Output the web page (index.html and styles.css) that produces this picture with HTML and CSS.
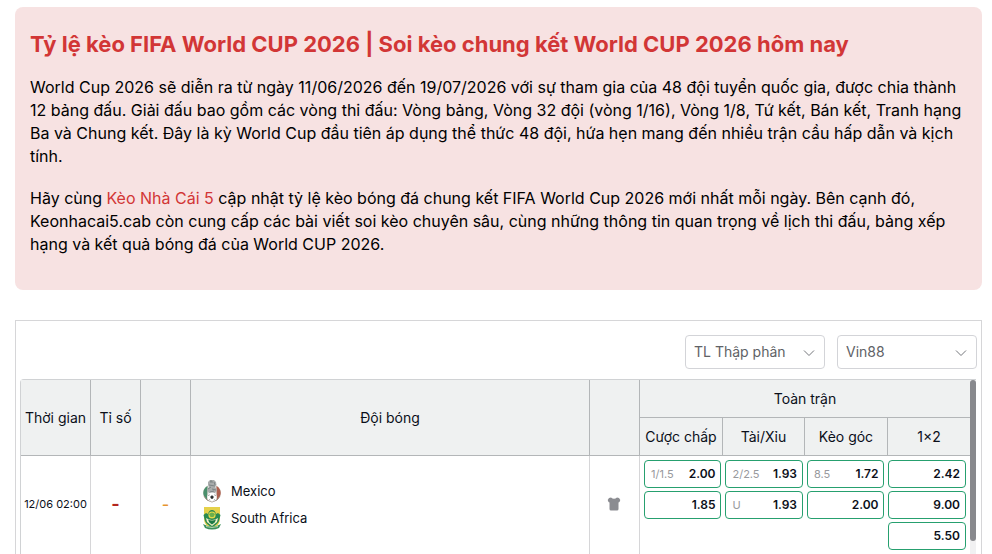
FILE: index.html
```html
<!DOCTYPE html>
<html lang="vi">
<head>
<meta charset="utf-8">
<meta name="viewport" content="width=device-width, initial-scale=1">
<title>Tỷ lệ kèo FIFA World CUP 2026</title>
<link rel="stylesheet" href="styles.css">
</head>
<body>
<main class="page">
  <section class="intro">
    <h1 class="intro-title">Tỷ lệ kèo FIFA World CUP 2026 | Soi kèo chung kết World CUP 2026 hôm nay</h1>
    <p>World Cup 2026 sẽ diễn ra từ ngày 11/06/2026 đến 19/07/2026 với sự tham gia của 48 đội tuyển quốc gia, được chia thành 12 bảng đấu. Giải đấu bao gồm các vòng thi đấu: Vòng bảng, Vòng 32 đội (vòng 1/16), Vòng 1/8, Tứ kết, Bán kết, Tranh hạng Ba và Chung kết. Đây là kỳ World Cup đầu tiên áp dụng thể thức 48 đội, hứa hẹn mang đến nhiều trận cầu hấp dẫn và kịch tính.</p>
    <p>Hãy cùng <a href="#">Kèo Nhà Cái 5</a> cập nhật tỷ lệ kèo bóng đá chung kết FIFA World Cup 2026 mới nhất mỗi ngày. Bên cạnh đó, Keonhacai5.cab còn cung cấp các bài viết soi kèo chuyên sâu, cùng những thông tin quan trọng về lịch thi đấu, bảng xếp hạng và kết quả bóng đá của World CUP 2026.</p>
  </section>

  <section class="board">
    <div class="filters">
      <div class="filter">
        <select aria-label="Loại tỷ lệ"><option>TL Thập phân</option></select>
        <svg class="chevron" viewBox="0 0 12 8" aria-hidden="true"><path d="M1 1.500 6 6.500 11 1.500"/></svg>
      </div>
      <div class="filter">
        <select aria-label="Nhà cái"><option>Vin88</option></select>
        <svg class="chevron" viewBox="0 0 12 8" aria-hidden="true"><path d="M1 1.500 6 6.500 11 1.500"/></svg>
      </div>
    </div>

    <div class="scroller">
      <table class="odds">
        <colgroup>
          <col class="col-time"><col class="col-small"><col class="col-small"><col><col class="col-small">
          <col class="col-wide"><col class="col-odds"><col class="col-wide"><col class="col-odds">
        </colgroup>
        <thead>
          <tr>
            <th rowspan="2">Thời gian</th>
            <th rowspan="2">Tỉ số</th>
            <th rowspan="2"></th>
            <th rowspan="2">Đội bóng</th>
            <th rowspan="2"></th>
            <th colspan="4" class="last">Toàn trận</th>
          </tr>
          <tr>
            <th>Cược chấp</th>
            <th>Tài/Xỉu</th>
            <th>Kèo góc</th>
            <th class="last">1×2</th>
          </tr>
        </thead>
        <tbody>
          <tr>
            <td class="time">12/06 02:00</td>
            <td class="score">-</td>
            <td class="half">-</td>
            <td class="teams">
              <div class="team">
                <svg class="crest" viewBox="0 0 20 24" aria-hidden="true">
                  <ellipse cx="10" cy="14" rx="9" ry="8.500" fill="#d2cdc6"/>
                  <path d="M5.500 7C0 10 0 17 5 21Z" fill="#4a8f6c"/>
                  <path d="M14.500 7C20 10 20 17 15 21Z" fill="#b0604f"/>
                  <path d="M6 6h8v15H6Z" fill="#e4e4e4"/>
                  <path d="M8 1 12 1 14 3 14.500 6 13 8 15 11 13 14H7L5 11 7 8 6 6 6 3Z" fill="#a9acac"/>
                  <path d="M8 3h3M7 6l6 1M6 10l3-2M14 11l-4-1M8 13l4-1M9 1v2M12 3l1 3" stroke="#6c7274" stroke-width=".7" fill="none"/>
                  <path d="M2 17q2 5 8 6 6-1 8-6" stroke="#9b8c7f" stroke-width="1" fill="none"/>
                  <circle cx="10" cy="18" r="4.600" fill="#fff"/>
                  <path d="m10 16.600 1.500 1.100-.6 1.700H9.100l-.6-1.700ZM6.500 17l.8-1.500M12.700 15.500l.8 1.500M7 20.500l1.200.8M13 20.500l-1.200.8" fill="#292c2d" stroke="#292c2d" stroke-width=".5"/>
                </svg>
                <span>Mexico</span>
              </div>
              <div class="team">
                <svg class="crest" viewBox="0 0 20 24" aria-hidden="true">
                  <path d="M2 1h16v12q0 7-8 9-8-2-8-9Z" fill="#e5d14a"/>
                  <path d="M1.500 9 4 7 6 8q1-4 4-4t4 4l2-1 2.500 2-1.500 6q-2 4-7 6-5-2-7-6Z" fill="#2b8a50"/>
                  <circle cx="10" cy="9" r="3.600" fill="#e6da48"/>
                  <path d="M7 8q3-3 6 0l-1.500 3h-3Z" fill="#6db04b"/>
                  <path d="M4 12q6 4 12 0l-1 4-5 4-5-4Z" fill="#f1f0c8"/>
                  <path d="M6 13.500q4 2 8 0l-1.300 3L10 18.500 7.300 16.500Z" fill="#1c7a45"/>
                  <path d="M1 18q9 5 18 0l-2 4q-7 3-14 0Z" fill="#3a8f5a"/>
                  <path d="M4 20.500q6 2 12 0" stroke="#cfe3c6" stroke-width=".8" fill="none"/>
                </svg>
                <span>South Africa</span>
              </div>
            </td>
            <td class="shirt">
              <svg viewBox="0 0 14 16" aria-hidden="true"><path d="M4 1.500Q7 4 10 1.500L12 2 13.300 4 12.500 6 11.500 6.500V13Q11.500 14.500 10 14.500H4Q2.500 14.500 2.500 13V6.500L1.500 6 .7 4 2 2Z"/></svg>
            </td>
            <td class="prices last" colspan="4">
              <div class="markets">
                <div class="stack">
                  <button><i>1/1.5</i><b>2.00</b></button>
                  <button><b>1.85</b></button>
                </div>
                <div class="stack">
                  <button><i>2/2.5</i><b>1.93</b></button>
                  <button><i>U</i><b>1.93</b></button>
                </div>
                <div class="stack">
                  <button><i>8.5</i><b>1.72</b></button>
                  <button><b>2.00</b></button>
                </div>
                <div class="stack">
                  <button><b>2.42</b></button>
                  <button><b>9.00</b></button>
                  <button><b>5.50</b></button>
                </div>
              </div>
            </td>
          </tr>
        </tbody>
      </table>
      <div class="track" aria-hidden="true"><div class="thumb"></div></div>
    </div>
  </section>
</main>
</body>
</html>
```
FILE: styles.css
```css
* { box-sizing: border-box; }

html { overflow: hidden; }

body {
  margin: 0;
  background: #fff;
  color: #0b0f19;
  font: 14px/20px Inter, "Liberation Sans", sans-serif;
}

.page { padding: 7px 10px 0 15px; }

.intro {
  padding: 24px 15px 34px;
  border-radius: 8px;
  background: #f7e2e2;
  color: #000;
  font-size: 16px;
  line-height: 23px;
}

.intro-title {
  margin: 0 0 18px;
  color: #d23636;
  font-size: 22px;
  font-weight: 700;
  line-height: 27px;
}

.intro p { margin: 0 0 19px; }
.intro p:last-child { margin: 0; }
.intro a { color: #d23636; text-decoration: none; }

.board {
  margin-top: 30px;
  padding: 14px 4px;
  border: 1px solid #d6d6d8;
}

.filters {
  display: flex;
  justify-content: flex-end;
  gap: 12px;
  margin-bottom: 10px;
}

.filter { position: relative; width: 140px; }

.filter select {
  display: block;
  width: 100%;
  height: 34px;
  padding: 0 30px 0 8px;
  border: 1px solid #d3d4d8;
  border-radius: 4px;
  background: #fff;
  color: #606266;
  font: inherit;
  appearance: none;
}

.chevron {
  position: absolute;
  top: 14px;
  right: 10px;
  width: 12px;
  height: 8px;
  fill: none;
  stroke: #74767b;
  pointer-events: none;
}

.scroller {
  display: flex;
  border-left: 1px solid #d0d2d4;
  border-top: 1px solid #d0d2d4;
  border-radius: 4px 0 0 0;
  margin-right: 1px;
}

.odds {
  flex: 1;
  width: 100%;
  table-layout: fixed;
  border-collapse: separate;
  border-spacing: 0;
}

.col-time { width: 70px; }
.col-small { width: 50px; }
.col-odds { width: 82px; }
.col-wide { width: 83px; }

th, td {
  padding: 0;
  text-align: center;
  font-weight: 400;
}

th {
  height: 38px;
  border-right: 1px solid #b3b6b8;
  border-bottom: 1px solid #b3b6b8;
  background: #eff1f1;
}

td {
  height: 99px;
  padding-bottom: 2px;
  border-right: 1px solid #d6d6d8;
  border-bottom: 1px solid #d6d6d8;
}

.last { border-right: 0; }

.time { font-size: 11px; }
.score { color: #b3261e; font-size: 18px; font-weight: 700; }
.half { color: #e6942e; font-size: 16px; font-weight: 500; }

.teams { padding-left: 11px; }

.team {
  display: flex;
  align-items: center;
  gap: 9px;
  height: 27px;
  font-size: 13px;
}

.crest { width: 20px; height: 24px; }

.shirt svg {
  display: block;
  width: 14px;
  height: 16px;
  margin: 0 auto;
  fill: #8b8c91;
}

.prices {
  padding: 4px;
  vertical-align: top;
}

.markets {
  display: grid;
  grid-template-columns: repeat(4, 1fr);
  align-items: start;
  gap: 4px;
}

.stack { display: grid; gap: 3px; }

.stack button {
  display: flex;
  align-items: center;
  width: 100%;
  height: 28px;
  padding: 0 5px 0 6px;
  border: 1px solid #26a06f;
  border-radius: 4px;
  background: #fff;
  color: #0b0f19;
  font: inherit;
}

.stack i {
  color: #98999d;
  font-size: 11px;
  font-style: normal;
}

.stack b {
  margin-left: auto;
  font-size: 12px;
  font-weight: 600;
}

.track { width: 6px; background: #f1f1f2; }

.thumb {
  height: 161px;
  border-radius: 3px;
  background: #88898d;
}
```
